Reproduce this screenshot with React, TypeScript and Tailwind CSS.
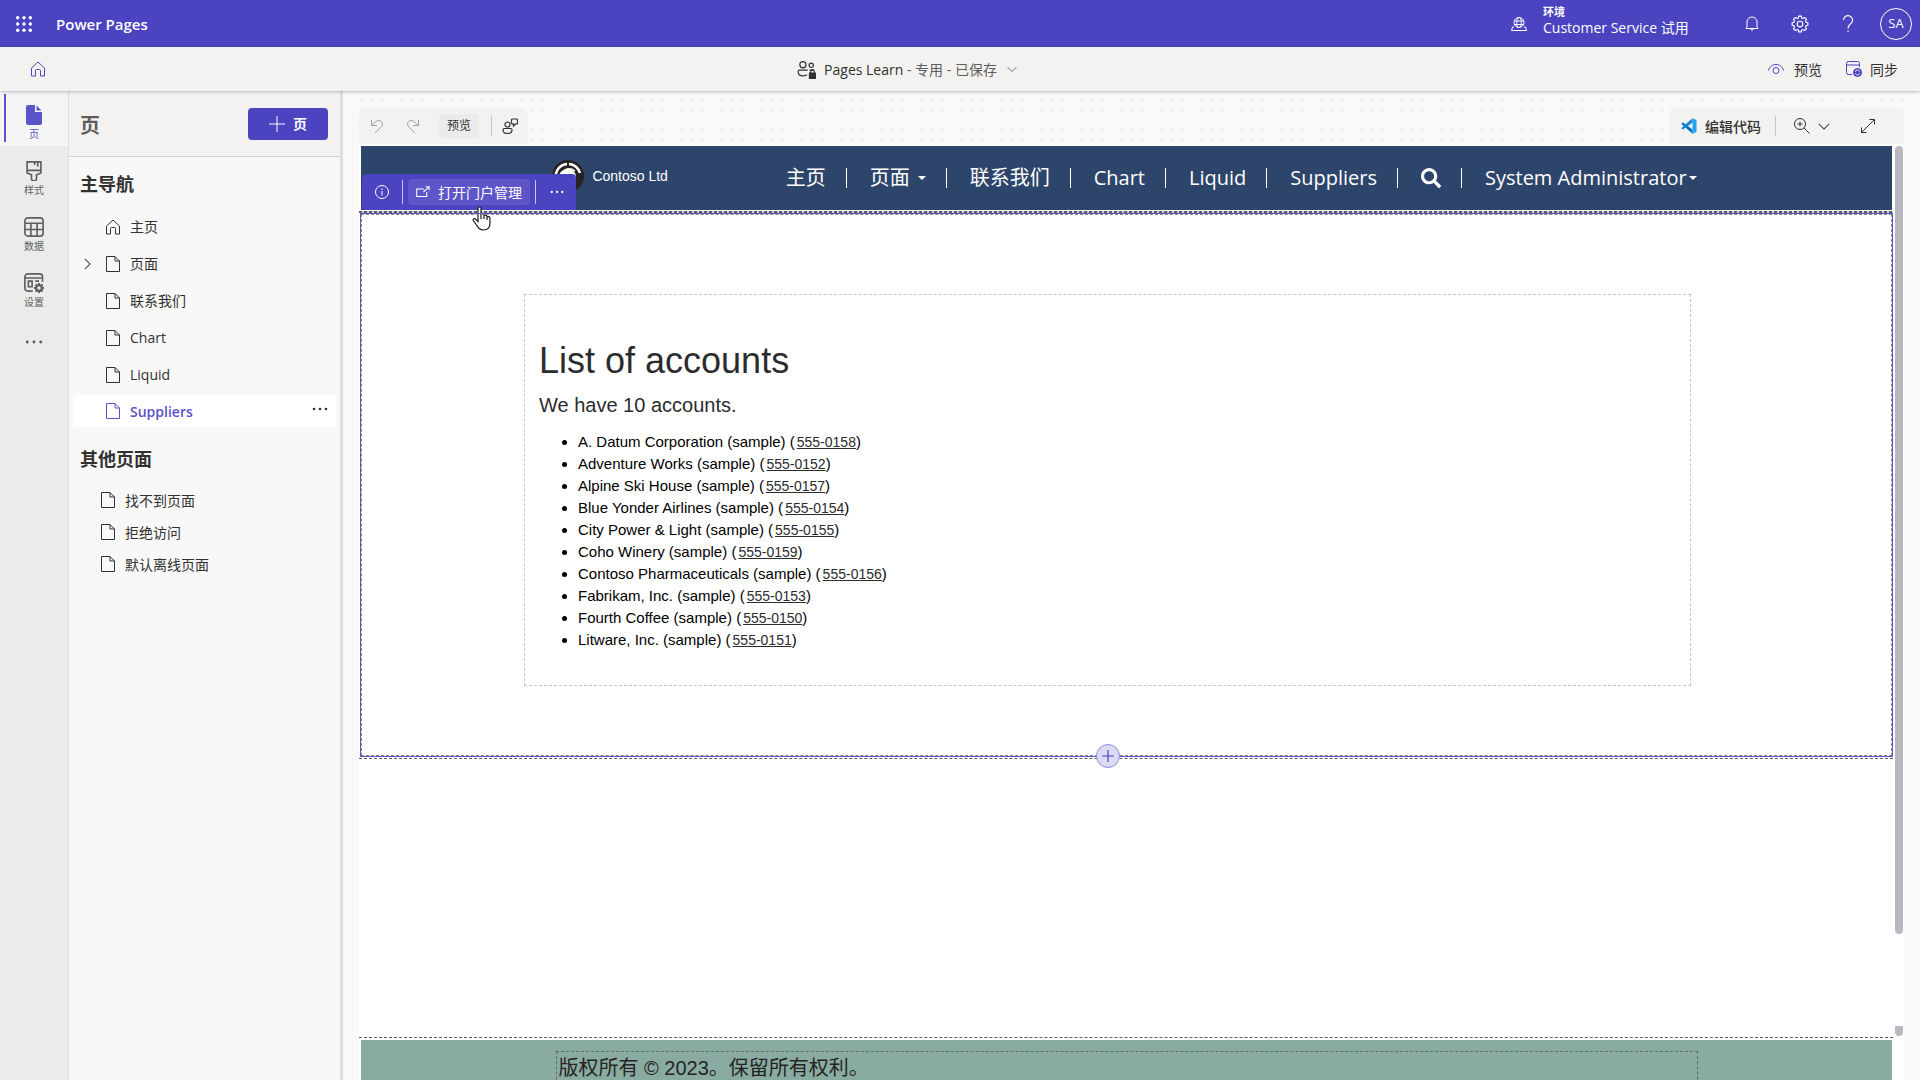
import type { ReactNode } from "react";
import clsx from "clsx";
import { FaSearch } from "react-icons/fa";

const NAV_PAGES = ["联系我们", "Chart", "Liquid"];

const OTHER_PAGES = ["找不到页面", "拒绝访问", "默认离线页面"];

const ACCOUNTS = [
  { name: "A. Datum Corporation (sample)", phone: "555-0158" },
  { name: "Adventure Works (sample)", phone: "555-0152" },
  { name: "Alpine Ski House (sample)", phone: "555-0157" },
  { name: "Blue Yonder Airlines (sample)", phone: "555-0154" },
  { name: "City Power & Light (sample)", phone: "555-0155" },
  { name: "Coho Winery (sample)", phone: "555-0159" },
  { name: "Contoso Pharmaceuticals (sample)", phone: "555-0156" },
  { name: "Fabrikam, Inc. (sample)", phone: "555-0153" },
  { name: "Fourth Coffee (sample)", phone: "555-0150" },
  { name: "Litware, Inc. (sample)", phone: "555-0151" },
];

/* ── Icons ── */
type IconProps = { children: ReactNode; size?: number; className?: string; stroke?: number };

const Icon = ({ children, size = 16, className = "", stroke = 1 }: IconProps) => (
  <svg
    width={size}
    height={size}
    viewBox="0 0 16 16"
    fill="none"
    stroke="currentColor"
    strokeWidth={stroke}
    className={clsx("shrink-0", className)}
    aria-hidden="true"
  >
    {children}
  </svg>
);

const HomeIcon = () => (
  <Icon><path d="M1.500 7 8 1l6.500 6v8h-4v-5.500a1 1 0 0 0-1-1h-3a1 1 0 0 0-1 1V15h-4z" /></Icon>
);

const PageIcon = () => (
  <Icon><path d="M1.500.5h8.500L14.500 5v10.500h-13zM10 .5V5h4.500" /></Icon>
);

const ChevronDown = ({ size = 12 }: { size?: number }) => (
  <Icon size={size} stroke={1.400}><path d="m1 5 7 7 7-7" /></Icon>
);

const DotsIcon = ({ size = 16 }: { size?: number }) => (
  <Icon size={size}>
    <g fill="currentColor" stroke="none">
      <circle cx="2" cy="8" r="1.300" /><circle cx="8" cy="8" r="1.300" /><circle cx="14" cy="8" r="1.300" />
    </g>
  </Icon>
);

const WaffleIcon = () => (
  <Icon>
    <g fill="currentColor" stroke="none">
      {[1.700, 8, 14.300].map((y) => [1.700, 8, 14.300].map((x) => (
        <circle key={`${x}-${y}`} cx={x} cy={y} r="1.700" />
      )))}
    </g>
  </Icon>
);

const VsCodeIcon = () => (
  <Icon>
    <g stroke="none">
      <path d="M11.500 15.800.6 5.900v-.7L2 4.500l9.500 7z" fill="#0070bb" />
      <path d="M11.500.2.600 10.100v.7l1.400.8 9.500-7z" fill="#0a86d6" />
      <path d="m11.500.2 4 1.900v11.800l-4 1.900z" fill="#22a5f1" />
    </g>
  </Icon>
);

/* ── Top bars ── */
const TopBar = () => (
  <header className="flex h-[47px] shrink-0 items-center bg-[#4b43c0] pr-2 pl-4 text-white">
    <button aria-label="应用启动器"><WaffleIcon /></button>
    <span className="ml-6 pt-0.5 text-[15px] font-semibold">Power Pages</span>
    <div className="ml-auto flex items-center">
      <Icon>
        <circle cx="8" cy="6.500" r="5" />
        <ellipse cx="8" cy="6.500" rx="2.300" ry="5" />
        <path d="M3 5h10M3 8.500h10M3 11H1.500L.5 14.500h15L14.500 11H13" />
      </Icon>
      <div className="mb-1.5 ml-4 w-[185px]">
        <div className="text-[11px] leading-[14px] font-semibold">环境</div>
        <div className="text-[14px] leading-[18px]">Customer Service 试用</div>
      </div>
      <div className="flex items-center">
        <button aria-label="通知" className="flex w-12 justify-center">
          <Icon><path d="M2 12.500h12l-1-2V6a5 5 0 0 0-10 0v4.500zM6.500 12.500a1.500 1.500 0 0 0 3 0" /></Icon>
        </button>
        <button aria-label="设置" className="flex w-12 justify-center">
          <Icon size={18}>
            <path d="m6.800 1-.4 1.700-1 .4-1.500-.9-1.700 1.700.9 1.500-.4 1-1.700.4v2.400l1.700.4.4 1-.9 1.500 1.700 1.700 1.500-.9 1 .4.4 1.700h2.400l.4-1.700 1-.4 1.500.9 1.700-1.700-.9-1.500.4-1 1.700-.4V6.800l-1.700-.4-.4-1 .9-1.500-1.700-1.700-1.500.9-1-.4L9.200 1z" />
            <circle cx="8" cy="8" r="2.500" />
          </Icon>
        </button>
        <button aria-label="帮助" className="flex w-12 justify-center">
          <Icon size={18}><path d="M4 4.500a4 4 0 1 1 6.700 3C9 9 8 9.500 8 12M8 13.800v1.400" /></Icon>
        </button>
        <button className="ml-2 flex size-8 items-center justify-center rounded-full border border-white text-[13px]">
          SA
        </button>
      </div>
    </div>
  </header>
);

const CommandBar = () => (
  <div className="relative z-10 flex h-11 shrink-0 items-center justify-between bg-[#f3f2f1] pr-[22px] pl-[30px] text-[14px] text-[#323130] shadow-[0_1px_3px_rgba(0,0,0,0.25)]">
    <a href="#home" aria-label="主页" className="w-4 text-[#4b43c0]"><HomeIcon /></a>
    <button className="flex items-center">
      <Icon size={19}>
        <circle cx="5" cy="4" r="2.600" /><circle cx="12" cy="4.500" r="1.800" />
        <path d="M9 8.500H2A1.200 1.200 0 0 0 1 10c0 2.500 1.800 3.300 4.200 3.300 1.500 0 2.500-.3 3.200-.8M10.500 8.500h4" />
        <path d="M10.500 11h5v4.500h-5z" fill="currentColor" /><path d="M11.500 11V9.800a1.500 1.500 0 0 1 3 0V11" />
      </Icon>
      <span className="ml-2">Pages Learn</span>
      <span className="mr-2.5 whitespace-pre text-[#605e5c]"> - 专用 - 已保存</span>
      <span className="text-[#605e5c]"><ChevronDown size={10} /></span>
    </button>
    <div className="flex items-center gap-6">
      <button className="flex items-center gap-2.5">
        <Icon className="text-[#4b43c0]">
          <path d="M.5 9.500C1.500 5.500 4.500 3.500 8 3.500s6.500 2 7.500 6" /><circle cx="8" cy="9.500" r="3" />
        </Icon>
        预览
      </button>
      <button className="flex items-center gap-2">
        <Icon className="text-[#4b43c0]">
          <path d="M6 13.500H2.500a2 2 0 0 1-2-2v-9a2 2 0 0 1 2-2h9a2 2 0 0 1 2 2V6M.5 4h13" />
          <circle cx="11.500" cy="11.500" r="4" fill="currentColor" />
          <path d="M9.500 11a2 2 0 0 1 4-.2M13.500 12a2 2 0 0 1-4 .2" stroke="white" strokeWidth="0.800" />
        </Icon>
        同步
      </button>
    </div>
  </div>
);

/* ── Left side ── */
const RailItem = ({ label, children }: { label: string; children: ReactNode }) => (
  <button className="flex h-14 w-full flex-col items-center pt-3 text-[10px] leading-[14px] text-[#605e5c]">
    {children}
    <span className="mt-0.5">{label}</span>
  </button>
);

const Rail = () => (
  <nav className="w-[68px] shrink-0 bg-[#ebebeb]">
    <button className="relative mb-[3px] flex h-[55px] w-full flex-col items-center bg-[#f5f5f5] pt-3.5 text-[10px] leading-[14px] text-[#5b53c8]">
      <span className="absolute top-[3px] left-1 h-12 w-0.5 bg-[#5b53c8]" />
      <svg width="16" height="20" viewBox="0 0 16 20" fill="currentColor" aria-hidden="true">
        <path d="M2 0h7v7h7v11a2 2 0 0 1-2 2H2a2 2 0 0 1-2-2V2a2 2 0 0 1 2-2z" /><path d="m10.500.5 5 5h-5z" />
      </svg>
      <span className="mt-0.5">页</span>
    </button>
    <RailItem label="样式">
      <Icon size={20} stroke={1.300}>
        <path d="M2.500.7h11v8.800L10 11v3a2 2 0 0 1-4 0v-3L2.500 9.500zM2.500 7.500h11M8.500.7v2.500M11 .7v3.800" />
      </Icon>
    </RailItem>
    <RailItem label="数据">
      <Icon size={20} stroke={1.300}>
        <rect x="0.700" y="0.700" width="14.600" height="14.600" rx="2.500" /><path d="M1 5h14M1 10h14M5.500 5v10M10.500 5v10" />
      </Icon>
    </RailItem>
    <RailItem label="设置">
      <Icon size={20} stroke={1.300}>
        <path d="M7 14.500H3a2.300 2.300 0 0 1-2.300-2.300V3A2.300 2.300 0 0 1 3 .7h9.500A2.300 2.300 0 0 1 14.800 3v4M1 4h13.500M3.500 6.500h3V11h-3zM9 6.500h3" />
        <path d="M12 8v8M8 12h8M9.200 9.200l5.600 5.600M14.800 9.200l-5.600 5.600" strokeWidth="1.600" />
        <circle cx="12" cy="12" r="2.300" strokeWidth="1.600" />
        <circle cx="12" cy="12" r="1.400" fill="#ebebeb" stroke="none" />
      </Icon>
    </RailItem>
    <button aria-label="更多" className="flex h-14 w-full justify-center pt-4 text-[#605e5c]"><DotsIcon size={18} /></button>
  </nav>
);

const PagesPanel = () => (
  <aside className="w-[275px] shrink-0 border-r-[3px] border-l border-r-[#e1dfdd] border-l-[#e1dfdd] bg-[#f8f8f8] text-[14px] text-[#323130]">
    <div className="flex h-[66px] items-center justify-between border-b border-[#d2d0ce] bg-[#f3f2f1] pr-3 pl-[11px]">
      <h1 className="pt-1 text-[20px] font-bold text-[#605e5c]">页</h1>
      <button className="flex h-8 w-20 items-center justify-center gap-2 rounded-sm bg-[#4b43c0] font-semibold text-white">
        <Icon><path d="M8 0v16M0 8h16" /></Icon>
        页
      </button>
    </div>
    <h2 className="px-[11px] pt-3.5 text-[18px] leading-[26px] font-bold">主导航</h2>
    <ul className="mt-[11px] px-1">
      <li className="flex h-[37px] items-center gap-2 pl-8"><HomeIcon /><span className="pl-px">主页</span></li>
      <li className="flex h-[37px] items-center gap-2 pl-2">
        <button aria-label="展开" className="mr-1 -rotate-90"><ChevronDown /></button>
        <PageIcon /><span className="pl-px">页面</span>
      </li>
      {NAV_PAGES.map((page) => (
        <li key={page} className="flex h-[37px] items-center gap-2 pl-8"><PageIcon /><span className="pl-px">{page}</span></li>
      ))}
      <li className="my-0.5 flex h-8 items-center gap-2 bg-white pr-2 pl-8 font-semibold text-[#5b53c8]">
        <PageIcon /><span className="pl-px">Suppliers</span>
        <button aria-label="更多选项" className="ml-auto pb-1 text-[#323130]"><DotsIcon /></button>
      </li>
    </ul>
    <h2 className="px-[11px] pt-[17px] text-[18px] leading-[26px] font-bold">其他页面</h2>
    <ul className="mt-3 pl-[31px]">
      {OTHER_PAGES.map((page) => (
        <li key={page} className="flex h-8 items-center gap-2"><PageIcon /><span className="pl-px">{page}</span></li>
      ))}
    </ul>
  </aside>
);

/* ── Canvas ── */
const CanvasToolbar = () => (
  <div className="flex h-9 justify-between text-[#323130]">
    <div className="flex items-center rounded-t-lg bg-[#f3f2f1] pr-2.5 pl-2.5">
      <button aria-label="撤消" className="text-[#a19f9d]">
        <Icon><path d="M2.500 2v5.500H8M2.500 7.500 7 3.500c4-3 8.500 1.500 5.500 5L6 15" /></Icon>
      </button>
      <button aria-label="恢复" className="ml-5 text-[#a19f9d]">
        <Icon><path d="M13.500 2v5.500H8M13.500 7.500 9 3.500c-4-3-8.500 1.500-5.500 5L10 15" /></Icon>
      </button>
      <button className="ml-[18px] h-6 w-10 rounded bg-[#ebebeb] text-[12px]">预览</button>
      <span className="ml-3 h-5 w-px bg-[#c8c6c4]" />
      <button aria-label="批注" className="ml-2.5">
        <Icon stroke={1.200}>
          <circle cx="5.500" cy="6.500" r="2.500" />
          <path d="M2 10.500h7a1.500 1.500 0 0 1 1 1.500c0 2.500-2 3.500-4.500 3.500S1 14.500 1 12a1.500 1.500 0 0 1 1-1.500zM10.500 1h4a1 1 0 0 1 1 1v3a1 1 0 0 1-1 1h-1L11.500 8V6a1.500 1.500 0 0 1-2-1V2a1 1 0 0 1 1-1z" />
        </Icon>
      </button>
    </div>
    <div className="flex items-center rounded-t-lg bg-[#f3f2f1] pr-7 pl-3 text-[14px]">
      <button className="flex items-center gap-2 font-medium"><VsCodeIcon />编辑代码</button>
      <span className="mr-[18px] ml-3.5 h-5 w-px bg-[#c8c6c4]" />
      <button aria-label="缩放" className="flex items-center gap-2">
        <Icon><circle cx="6" cy="6" r="5.500" /><path d="m10 10 5.500 5.500M6 3.500v5M3.500 6h5" /></Icon>
        <ChevronDown />
      </button>
      <button aria-label="全屏" className="ml-[30px]">
        <Icon><path d="M9.500 1.500h5v5M14.500 1.500l-13 13M1.500 9.500v5h5" /></Icon>
      </button>
    </div>
  </div>
);

const SiteNavItem = ({ children, className = "" }: { children: ReactNode; className?: string }) => (
  <li className="flex items-center">
    <a href="#site" className={clsx("flex items-center", className)}>{children}</a>
  </li>
);

const NavDivider = () => <li className="mr-[23px] ml-5 h-5 w-px bg-white" aria-hidden="true" />;

const Caret = () => <span className="border-x-4 border-t-4 border-x-transparent border-t-white" />;

const SelectionToolbar = () => (
  <div className="absolute bottom-0 left-px flex h-9 items-center rounded-t-sm bg-[#4b43c0] pr-3 pl-3 text-[14px] text-white">
    <button aria-label="信息">
      <Icon><circle cx="8" cy="8" r="6.500" /><path d="M8 7v4.500M8 4.500V6" /></Icon>
    </button>
    <span className="ml-3 h-6 w-px bg-white/70" />
    <button className="mx-[5px] flex h-[26px] items-center gap-2 rounded bg-[#5d55c8] px-2">
      <Icon size={14} stroke={1.200}><path d="M9 4.500H.8v8.700h11.500V8M8.500 8l6-5.500M11 2h4v4" /></Icon>
      打开门户管理
    </button>
    <span className="h-6 w-px bg-white/70" />
    <button aria-label="更多" className="ml-3.5"><DotsIcon size={14} /></button>
    <svg width="20" height="26" viewBox="0 0 20 26" className="absolute top-8 left-[110px]" aria-hidden="true">
      <path
        d="M6 2.500C6 .5 9 .5 9 2.500V9c0-1.500 3-1.500 3 0v1c0-1.500 3-1.200 3 .5v1c.5-1.500 3-1 3 1v4c0 5-2 7.500-6.500 7.500-4 0-5-2-7-5L1.300 14.500c-.8-1.800 1.500-2.500 2.700-1l2 2z"
        fill="white" stroke="#1b1a19" strokeWidth="1.200"
      />
      <path d="M9 9v4M12 10v3M15 11.500V14" stroke="#1b1a19" strokeWidth="1.200" />
    </svg>
  </div>
);

const SiteHeader = () => (
  <div className="relative mr-px ml-0.5 h-16 bg-[#2d456a] text-white">
    <div className="mx-auto flex h-full w-3/4 items-center">
      <svg width="32" height="32" viewBox="0 0 32 32" className="mb-1 shrink-0" aria-hidden="true">
        <circle cx="16" cy="16" r="16" fill="#252423" />
        <path d="M4 18a12 12 0 0 1 11-14M17 4a12 12 0 0 1 11 9" fill="none" stroke="white" strokeWidth="2.500" />
        <path d="M7 19a10 10 0 0 1 16-8" fill="none" stroke="white" strokeWidth="1.500" />
        <circle cx="16" cy="17" r="8" fill="white" />
      </svg>
      <span className="mb-1 ml-2 font-['Liberation_Sans'] text-[14px]">Contoso Ltd</span>
      <ul className="mr-1 ml-auto flex items-center text-[20px] whitespace-nowrap">
        <SiteNavItem>主页</SiteNavItem>
        <NavDivider />
        <SiteNavItem className="gap-2">页面<Caret /></SiteNavItem>
        <NavDivider />
        <SiteNavItem>联系我们</SiteNavItem>
        <NavDivider />
        <SiteNavItem>Chart</SiteNavItem>
        <NavDivider />
        <SiteNavItem>Liquid</SiteNavItem>
        <NavDivider />
        <SiteNavItem>Suppliers</SiteNavItem>
        <NavDivider />
        <li><button aria-label="搜索" className="flex"><FaSearch size={20} /></button></li>
        <NavDivider />
        <SiteNavItem className="gap-0.5">System Administrator<Caret /></SiteNavItem>
      </ul>
    </div>
    <SelectionToolbar />
  </div>
);

const AccountsSection = () => (
  <section className="relative ml-px border border-[#5b53c8]">
    <div className="border border-dashed border-[#8a8886] pt-[79px] pr-[200px] pb-[69px] pl-[162px]">
      <div className="h-[392px] border border-dashed border-[#c8c6c4] px-3.5 pt-11 font-['Liberation_Sans'] text-[#2c2c2e]">
        <h1 className="text-[36px] leading-[44px]">List of accounts</h1>
        <p className="mt-2 text-[20px] leading-7">We have 10 accounts.</p>
        <ul className="mt-3 list-disc pl-[39px] text-[15px] leading-[22px] text-black">
          {ACCOUNTS.map(({ name, phone }) => (
            <li key={phone}>
              {name} (<a href={`tel:${phone}`} className="ml-0.5 text-[14px] text-[#2c2c2e] underline">{phone}</a>)
            </li>
          ))}
        </ul>
      </div>
    </div>
    <button
      aria-label="添加节"
      className="absolute -bottom-3 left-[735px] flex size-6 items-center justify-center rounded-full border border-[#8f88dc] bg-[#dddaf4] text-[#4b43c0]"
    >
      <Icon size={12} stroke={1.600}><path d="M8 0v16M0 8h16" /></Icon>
    </button>
  </section>
);

const SitePreview = () => (
  <div className="flex min-h-0 flex-1 bg-white pt-0.5">
    <div className="min-w-0 flex-1 overflow-hidden">
      <SiteHeader />
      <div className="mt-px h-0.5 bg-[repeating-linear-gradient(90deg,#605e5c_0_3px,#d2d0ce_3px_5px)]" />
      <AccountsSection />
      <div className="mt-px border-t border-dashed border-[#605e5c]" />
      <div className="h-[278px]" />
      <div className="border-t border-dashed border-[#605e5c]" />
      <footer className="mt-0.5 mr-px ml-0.5 bg-[#89aba1] pt-[11px]">
        <div className="mx-auto h-20 w-[1142px] border border-dashed border-[#5c6b66] pt-px pl-0.5 font-['Liberation_Sans','Noto_Sans_CJK_SC',sans-serif] text-[20px] leading-[30px] text-[#252423]">
          <p>版权所有 © 2023。保留所有权利。</p>
        </div>
      </footer>
    </div>
    <div className="flex w-[11px] shrink-0 flex-col items-start pl-0.5">
      <div className="h-[788px] w-2 rounded-full bg-[#b9b7c0]" />
      <div className="mt-[92px] h-2.5 w-2 rounded-b-full bg-[#b9b7c0]" />
    </div>
  </div>
);

const App = () => (
  <div className="flex h-screen flex-col overflow-hidden font-['Open_Sans','Noto_Sans_CJK_SC',sans-serif]">
    <TopBar />
    <CommandBar />
    <div className="flex min-h-0 flex-1">
      <Rail />
      <PagesPanel />
      <main className="flex min-w-0 flex-1 flex-col bg-[#faf9f8] bg-[linear-gradient(#faf9f8_8px,transparent_8px),linear-gradient(90deg,#faf9f8_8px,#ebe9e8_8px)] bg-[size:10px_10px] pt-[17px] pr-4 pl-4">
        <CanvasToolbar />
        <SitePreview />
      </main>
    </div>
  </div>
);

export default App;
